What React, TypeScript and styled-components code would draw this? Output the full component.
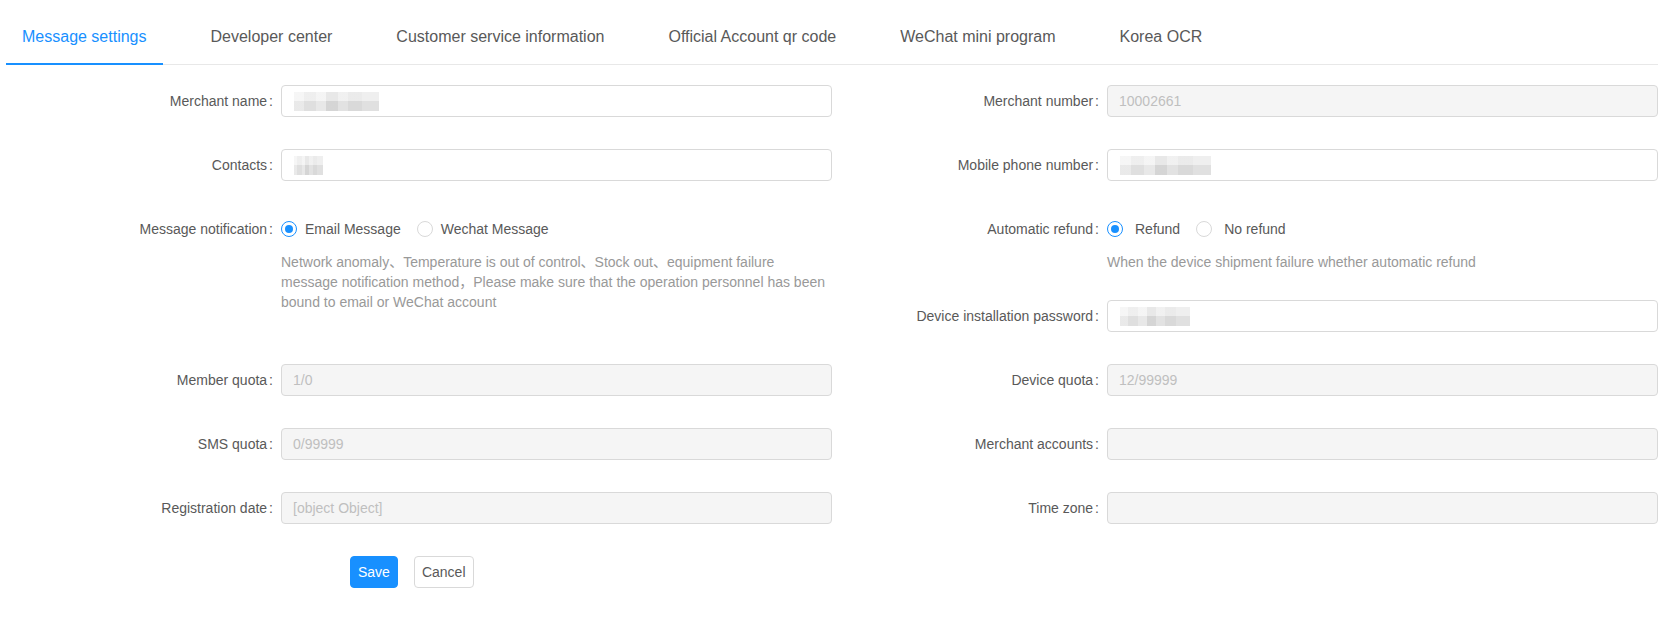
import React from 'react'
import styled, { createGlobalStyle } from 'styled-components'

const GlobalStyle = createGlobalStyle`
  html, body {
    margin: 0;
    padding: 0;
    background: #fff;
  }
  body {
    font-family: "Liberation Sans", Arial, "Noto Sans CJK SC", sans-serif;
    font-size: 14px;
    color: #595959;
  }
`

const Page = styled.div`
  padding: 0 12px 0 6px;
`

const TabBar = styled.div`
  display: flex;
  border-bottom: 1px solid #e8e8e8;
`

const Tab = styled.div<{ $active?: boolean }>`
  padding: 26px 16px 15px;
  margin-right: 32px;
  margin-bottom: -1px;
  font-size: 16px;
  line-height: 22px;
  white-space: nowrap;
  cursor: pointer;
  color: ${(p) => (p.$active ? '#1890ff' : '#595959')};
  border-bottom: 2px solid ${(p) => (p.$active ? '#1890ff' : 'transparent')};
`

const Form = styled.div`
  display: grid;
  grid-template-columns: 1fr 1fr;
  margin-top: 20px;
`

const Column = styled.div`
  display: flex;
  flex-direction: column;
`

const Item = styled.div<{ $mb?: number }>`
  display: grid;
  grid-template-columns: 275px 1fr;
  margin-bottom: ${(p) => (p.$mb ?? 32)}px;
`

const Label = styled.label`
  text-align: right;
  line-height: 32px;
  height: 32px;
  color: #595959;
  white-space: nowrap;
  &::after {
    content: ':';
    margin: 0 8px 0 2px;
  }
`

const Control = styled.div`
  min-width: 0;
`

const Input = styled.div<{ $disabled?: boolean }>`
  box-sizing: border-box;
  height: 32px;
  padding: 4px 11px;
  line-height: 22px;
  border: 1px solid #d9d9d9;
  border-radius: 4px;
  display: flex;
  align-items: center;
  background: ${(p) => (p.$disabled ? '#f5f5f5' : '#fff')};
  color: ${(p) => (p.$disabled ? '#bfbfbf' : '#595959')};
`

const Mosaic = styled.span<{ $w: number }>`
  display: inline-block;
  width: ${(p) => p.$w}px;
  height: 19px;
  margin-left: 1px;
  background:
    linear-gradient(180deg, rgba(255, 255, 255, 0.35) 0 45%, rgba(0, 0, 0, 0.03) 45% 100%),
    linear-gradient(90deg, #f1f1f1 0 12%, #e6e6e6 12% 26%, #efefef 26% 38%, #dcdcdc 38% 52%,
      #e9e9e9 52% 64%, #e0e0e0 64% 80%, #e7e7e7 80% 100%);
`

const RadioGroup = styled.div`
  display: flex;
  align-items: center;
  height: 32px;
`

const RadioOption = styled.span`
  display: inline-flex;
  align-items: center;
  margin-right: 8px;
  color: #595959;
  white-space: nowrap;
`

const RadioDot = styled.span<{ $checked?: boolean }>`
  box-sizing: border-box;
  width: 16px;
  height: 16px;
  border-radius: 50%;
  border: 1px solid ${(p) => (p.$checked ? '#1890ff' : '#d9d9d9')};
  display: inline-flex;
  align-items: center;
  justify-content: center;
  background: #fff;
  &::after {
    content: '';
    width: 8px;
    height: 8px;
    border-radius: 50%;
    background: #1890ff;
    display: ${(p) => (p.$checked ? 'block' : 'none')};
  }
`

const RadioText = styled.span<{ $lead?: boolean }>`
  padding: 0 8px 0 ${(p) => (p.$lead ? 12 : 8)}px;
`

const Extra = styled.div`
  margin-top: 7px;
  line-height: 20px;
  color: #999;
  white-space: nowrap;
`

const Actions = styled.div`
  display: flex;
  gap: 16px;
  margin-left: 344px;
`

const Button = styled.button<{ $primary?: boolean }>`
  height: 32px;
  padding: 0 7px;
  font-family: inherit;
  font-size: 14px;
  border-radius: 4px;
  cursor: pointer;
  border: 1px solid ${(p) => (p.$primary ? '#1890ff' : '#d9d9d9')};
  background: ${(p) => (p.$primary ? '#1890ff' : '#fff')};
  color: ${(p) => (p.$primary ? '#fff' : '#595959')};
`

const tabs = [
  'Message settings',
  'Developer center',
  'Customer service information',
  'Official Account qr code',
  'WeChat mini program',
  'Korea OCR',
]

function Radios({ options, lead }: { options: string[]; lead?: boolean }) {
  return (
    <RadioGroup>
      {options.map((o, i) => (
        <RadioOption key={o}>
          <RadioDot $checked={i === 0} />
          <RadioText $lead={lead}>{o}</RadioText>
        </RadioOption>
      ))}
    </RadioGroup>
  )
}

export default function App() {
  return (
    <Page>
      <GlobalStyle />
      <TabBar>
        {tabs.map((t, i) => (
          <Tab key={t} $active={i === 0}>{t}</Tab>
        ))}
      </TabBar>
      <Form>
        <Column>
          <Item>
            <Label>Merchant name</Label>
            <Control>
              <Input><Mosaic $w={85} /></Input>
            </Control>
          </Item>
          <Item>
            <Label>Contacts</Label>
            <Control>
              <Input><Mosaic $w={29} /></Input>
            </Control>
          </Item>
          <Item $mb={52}>
            <Label>Message notification</Label>
            <Control>
              <Radios options={['Email Message', 'Wechat Message']} />
              <Extra>
                Network anomaly、Temperature is out of control、Stock out、equipment failure
                <br />
                message notification method，Please make sure that the operation personnel has been
                <br />
                bound to email or WeChat account
              </Extra>
            </Control>
          </Item>
          <Item>
            <Label>Member quota</Label>
            <Control>
              <Input $disabled>1/0</Input>
            </Control>
          </Item>
          <Item>
            <Label>SMS quota</Label>
            <Control>
              <Input $disabled>0/99999</Input>
            </Control>
          </Item>
          <Item>
            <Label>Registration date</Label>
            <Control>
              <Input $disabled>[object Object]</Input>
            </Control>
          </Item>
          <Actions>
            <Button $primary>Save</Button>
            <Button>Cancel</Button>
          </Actions>
        </Column>
        <Column>
          <Item>
            <Label>Merchant number</Label>
            <Control>
              <Input $disabled>10002661</Input>
            </Control>
          </Item>
          <Item>
            <Label>Mobile phone number</Label>
            <Control>
              <Input><Mosaic $w={91} /></Input>
            </Control>
          </Item>
          <Item $mb={28}>
            <Label>Automatic refund</Label>
            <Control>
              <Radios options={['Refund', 'No refund']} lead />
              <Extra>When the device shipment failure whether automatic refund</Extra>
            </Control>
          </Item>
          <Item>
            <Label>Device installation password</Label>
            <Control>
              <Input><Mosaic $w={70} /></Input>
            </Control>
          </Item>
          <Item>
            <Label>Device quota</Label>
            <Control>
              <Input $disabled>12/99999</Input>
            </Control>
          </Item>
          <Item>
            <Label>Merchant accounts</Label>
            <Control>
              <Input $disabled />
            </Control>
          </Item>
          <Item>
            <Label>Time zone</Label>
            <Control>
              <Input $disabled />
            </Control>
          </Item>
        </Column>
      </Form>
    </Page>
  )
}
